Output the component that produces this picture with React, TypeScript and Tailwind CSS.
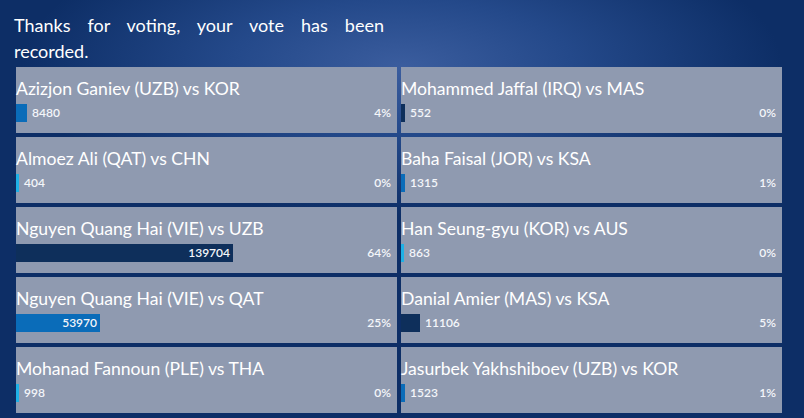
import React from "react"

type Vote = {
  title: string
  count: number
  pct: string
  bar: number
  color: "navy" | "blue" | "cyan"
  inside?: boolean
}

const left: Vote[] = [
  { title: "Azizjon Ganiev (UZB) vs KOR", count: 8480, pct: "4%", bar: 11, color: "blue" },
  { title: "Almoez Ali (QAT) vs CHN", count: 404, pct: "0%", bar: 3, color: "cyan" },
  { title: "Nguyen Quang Hai (VIE) vs UZB", count: 139704, pct: "64%", bar: 217, color: "navy", inside: true },
  { title: "Nguyen Quang Hai (VIE) vs QAT", count: 53970, pct: "25%", bar: 84, color: "blue", inside: true },
  { title: "Mohanad Fannoun (PLE) vs THA", count: 998, pct: "0%", bar: 3, color: "cyan" },
]

const right: Vote[] = [
  { title: "Mohammed Jaffal (IRQ) vs MAS", count: 552, pct: "0%", bar: 4, color: "navy" },
  { title: "Baha Faisal (JOR) vs KSA", count: 1315, pct: "1%", bar: 4, color: "blue" },
  { title: "Han Seung-gyu (KOR) vs AUS", count: 863, pct: "0%", bar: 3, color: "cyan" },
  { title: "Danial Amier (MAS) vs KSA", count: 11106, pct: "5%", bar: 19, color: "navy" },
  { title: "Jasurbek Yakhshiboev (UZB) vs KOR", count: 1523, pct: "1%", bar: 4, color: "blue" },
]

const barColor = {
  navy: "bg-[#0e2f5b]",
  blue: "bg-[#0a6cb9]",
  cyan: "bg-[#1fb1e6]",
}

function VoteCard({ v }: { v: Vote }) {
  return (
    <div className="h-[66px] bg-[#8f9ab0] flex flex-col pt-[10px]">
      <p className="text-[17.6px] leading-[24px] text-white whitespace-nowrap">{v.title}</p>

      <div className="mt-[3px] h-[18px] flex items-center text-[12px] font-semibold text-[#f4f6fa]">
        {v.inside ? (
          <div
            className={`h-full ${barColor[v.color]} flex items-center justify-end pr-[3px]`}
            style={{ width: v.bar }}
          >
            {v.count}
          </div>
        ) : (
          <>
            <div className={`h-full ${barColor[v.color]}`} style={{ width: v.bar }} />
            <span className="ml-[5px]">{v.count}</span>
          </>
        )}
        <span className="ml-auto pr-[6px]">{v.pct}</span>
      </div>
    </div>
  )
}

export default function App() {
  return (
    <main
      className="w-[804px] h-[418px] overflow-hidden pl-[14px] pt-[12px] bg-[#0d2e66] bg-[radial-gradient(ellipse_380px_150px_at_50%_16%,#3b5d9e_0%,#24498a_45%,#0d2e66_100%)]"
      style={{ fontFamily: "Lato, 'Open Sans', sans-serif" }}
    >
      {/* Heading */}
      <p className="w-[370px] text-[18px] leading-[26px] text-white text-justify">
        Thanks for voting, your vote has been recorded.
      </p>

      {/* Votes */}
      <div className="mt-[3px] ml-[2px] grid grid-cols-[381px_381px] gap-[4px]">
        <div className="flex flex-col gap-[4px]">
          {left.map((v) => (
            <VoteCard key={v.title} v={v} />
          ))}
        </div>
        <div className="flex flex-col gap-[4px]">
          {right.map((v) => (
            <VoteCard key={v.title} v={v} />
          ))}
        </div>
      </div>
    </main>
  )
}
